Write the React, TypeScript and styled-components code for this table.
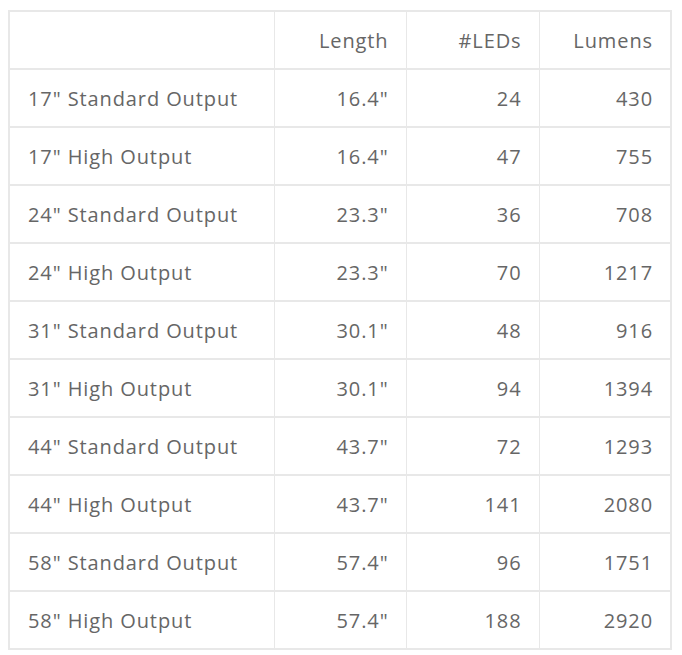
import * as React from 'react';
import styled, {createGlobalStyle} from 'styled-components';

interface ISpecRow {
    name: string;
    length: string;
    leds: number;
    lumens: number;
}

const rows: ISpecRow[] = [
    {name: '17" Standard Output', length: '16.4"', leds: 24, lumens: 430},
    {name: '17" High Output', length: '16.4"', leds: 47, lumens: 755},
    {name: '24" Standard Output', length: '23.3"', leds: 36, lumens: 708},
    {name: '24" High Output', length: '23.3"', leds: 70, lumens: 1217},
    {name: '31" Standard Output', length: '30.1"', leds: 48, lumens: 916},
    {name: '31" High Output', length: '30.1"', leds: 94, lumens: 1394},
    {name: '44" Standard Output', length: '43.7"', leds: 72, lumens: 1293},
    {name: '44" High Output', length: '43.7"', leds: 141, lumens: 2080},
    {name: '58" Standard Output', length: '57.4"', leds: 96, lumens: 1751},
    {name: '58" High Output', length: '57.4"', leds: 188, lumens: 2920},
];

const GlobalStyle = createGlobalStyle`
    body {
        margin: 10px 8px 8px;
        background: #fff;
        font-family: "Open Sans", "Liberation Sans", sans-serif;
    }
`;

const SpecTable = styled.table`
    width: 662px;
    border-collapse: collapse;
    table-layout: fixed;
    border: 2px solid #e8e8e8;
    color: #666;
    font-size: 20px;
    letter-spacing: 0.9px;
`;

const Col = styled.col<{w: number}>`
    width: ${props => props.w}px;
`;

const Cell = styled.td<{align?: 'left' | 'right'}>`
    height: 56px;
    padding: 0 17px 0 18px;
    border-top: 2px solid #e8e8e8;
    border-bottom: 2px solid #e8e8e8;
    border-left: 1px solid #e8e8e8;
    border-right: 1px solid #e8e8e8;
    text-align: ${props => props.align || 'right'};
    font-weight: normal;
    white-space: nowrap;
`;

const HeadCell = styled(Cell).attrs({as: 'th'})``;

export default function App(): JSX.Element {
    return (
        <>
            <GlobalStyle />
            <SpecTable>
                <colgroup>
                    <Col w={265} />
                    <Col w={132} />
                    <Col w={133} />
                    <Col w={132} />
                </colgroup>
                <thead>
                    <tr>
                        <HeadCell align="left" />
                        <HeadCell>Length</HeadCell>
                        <HeadCell>#LEDs</HeadCell>
                        <HeadCell>Lumens</HeadCell>
                    </tr>
                </thead>
                <tbody>
                    {rows.map(row => (
                        <tr key={row.name}>
                            <Cell align="left">{row.name}</Cell>
                            <Cell>{row.length}</Cell>
                            <Cell>{row.leds}</Cell>
                            <Cell>{row.lumens}</Cell>
                        </tr>
                    ))}
                </tbody>
            </SpecTable>
        </>
    );
}
